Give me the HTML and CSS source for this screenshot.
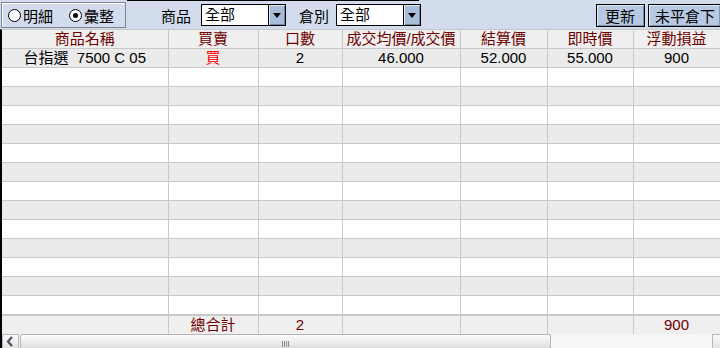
FILE: index.html
```html
<!DOCTYPE html>
<html lang="zh-Hant">
<head>
    <meta charset="UTF-8">
    <meta name="viewport" content="width=device-width, initial-scale=1.0">
    <title>未平倉彙整</title>
    <link rel="stylesheet" href="styles.css">
</head>
<body>
    <div class="toolbar">
        <div class="mode-box">
            <label class="radio"><span class="dot"></span>明細</label>
            <label class="radio"><span class="dot on"></span>彙整</label>
        </div>
        <span class="field-label first">商品</span>
        <div class="select"><span class="value">全部</span><span class="arrow"></span></div>
        <span class="field-label second">倉別</span>
        <div class="select"><span class="value">全部</span><span class="arrow"></span></div>
        <div class="spacer"></div>
        <button class="btn">更新</button>
        <button class="btn wide">未平倉下</button>
    </div>

    <div class="grid-wrap">
        <table class="grid">
            <colgroup>
                <col style="width:166px">
                <col style="width:90px">
                <col style="width:84px">
                <col style="width:118px">
                <col style="width:87px">
                <col style="width:86px">
                <col style="width:87px">
            </colgroup>
            <thead>
                <tr>
                    <th>商品名稱</th>
                    <th>買賣</th>
                    <th>口數</th>
                    <th>成交均價/成交價</th>
                    <th>結算價</th>
                    <th>即時價</th>
                    <th>浮動損益</th>
                </tr>
            </thead>
            <tbody id="rows">
                <tr class="alt">
                    <td>台指選&nbsp;&nbsp;7500 C 05</td>
                    <td class="buy">買</td>
                    <td>2</td>
                    <td>46.000</td>
                    <td>52.000</td>
                    <td>55.000</td>
                    <td>900</td>
                </tr>
            </tbody>
            <tfoot>
                <tr>
                    <td></td>
                    <td>總合計</td>
                    <td>2</td>
                    <td></td>
                    <td></td>
                    <td></td>
                    <td>900</td>
                </tr>
            </tfoot>
        </table>
    </div>

    <div class="hscroll">
        <span class="sb-btn left">
            <svg width="9" height="11" viewBox="0 0 9 11"><path d="M6 1 L2 5.5 L6 10" fill="none" stroke="#4a5560" stroke-width="2.2"/></svg>
        </span>
        <span class="thumb"><span class="grip"></span></span>
        <span class="track"></span>
        <span class="sb-btn right"></span>
    </div>

    <script>
        // fill the empty rows under the data row
        const body = document.getElementById('rows');
        for (let i = 1; i < 14; i++) {
            const tr = document.createElement('tr');
            if (i % 2 === 0) tr.className = 'alt';
            for (let c = 0; c < 7; c++) {
                tr.appendChild(document.createElement('td'));
            }
            body.appendChild(tr);
        }
    </script>
</body>
</html>
```
FILE: styles.css
```css
body {
    margin: 0;
    padding: 0;
    width: 720px;
    height: 348px;
    overflow: hidden;
    background: #fff;
    font-family: 'Liberation Sans', 'Noto Sans CJK TC', sans-serif;
    font-size: 15px;
    color: #000;
}
.toolbar {
    display: flex;
    align-items: center;
    height: 29px;
    background: #d3dcec;
    box-sizing: border-box;
    padding: 2px 0 1px 1px;
    position: relative;
    white-space: nowrap;
}
.toolbar::before {
    content: "";
    position: absolute;
    left: 127px;
    top: 0;
    width: 292px;
    height: 1px;
    background: #000;
}
.mode-box {
    display: flex;
    align-items: center;
    flex-shrink: 0;
    height: 26px;
    width: 125px;
    box-sizing: border-box;
    border: 1px solid #7d8593;
    box-shadow: inset 1px 1px 0 #fff;
    padding-left: 6px;
}
.radio {
    display: flex;
    align-items: center;
    flex-shrink: 0;
    margin-right: 16px;
}
.dot {
    flex-shrink: 0;
    width: 11px;
    height: 11px;
    border: 1px solid #000;
    border-radius: 50%;
    background: #fff;
    margin-right: 2px;
    position: relative;
}
.dot.on::after {
    content: "";
    position: absolute;
    left: 3px;
    top: 3px;
    width: 5px;
    height: 5px;
    border-radius: 50%;
    background: #000;
}
.field-label {
    margin: 0 10px 0 35px;
}
.field-label.second {
    margin: 0 7px 0 13px;
}
.select {
    display: flex;
    flex-shrink: 0;
    width: 85px;
    height: 22px;
    box-sizing: border-box;
    border: 1px solid #000;
    background: #fff;
}
.select .value {
    flex: 1;
    line-height: 20px;
    padding-left: 3px;
}
.select .arrow {
    width: 16px;
    background: #a9bcd9;
    border-left: 1px solid #000;
    box-shadow: inset 1px 1px 0 #dfe7f3, inset -1px -1px 0 #7387a6;
    position: relative;
}
.select .arrow::after {
    content: "";
    position: absolute;
    left: 4px;
    top: 8px;
    border-left: 4px solid transparent;
    border-right: 4px solid transparent;
    border-top: 5px solid #000;
}
.spacer {
    flex: 1;
}
.btn {
    flex-shrink: 0;
    height: 23px;
    width: 49px;
    margin-right: 3px;
    padding: 0;
    border: 1px solid #000;
    background: #b7c9e2;
    box-shadow: inset 1px 1px 0 #e6edf7, inset -1px -1px 0 #7f91ad;
    font-family: inherit;
    font-size: 15px;
    color: #000;
    white-space: nowrap;
    overflow: hidden;
    text-align: left;
    padding-left: 8px;
}
.btn.wide {
    width: 72px;
    margin-right: 0;
    border-right: none;
    padding-left: 6px;
}
.grid-wrap {
    border-left: 2px solid #000;
    border-top: 1px solid #c8c8c8;
    height: 304px;
    overflow: hidden;
}
.grid {
    border-collapse: collapse;
    table-layout: fixed;
    width: 718px;
}
.grid th,
.grid td {
    height: 18px;
    padding: 0;
    border-right: 1px solid #c8c8c8;
    border-bottom: 1px solid #c8c8c8;
    text-align: center;
    line-height: 18px;
    white-space: nowrap;
    overflow: hidden;
    font-weight: normal;
}
.grid th {
    background: #efefef;
    color: #6e0000;
}
.grid tbody td {
    background: #fff;
}
.grid tbody tr.alt td {
    background: #ebebeb;
}
.grid td.buy {
    color: #f00;
}
.grid tfoot td {
    background: #efefef;
    color: #6e0000;
    border-top: 2px solid #c8c8c8;
}
.hscroll {
    display: flex;
    height: 15px;
    border-left: 2px solid #000;
    background: #f6f6f6;
}
.sb-btn {
    display: flex;
    justify-content: center;
    align-items: center;
    width: 17px;
    background: linear-gradient(#fbfbfb, #e2e2e2);
    border: 1px solid #b8b8b8;
    box-sizing: border-box;
}
.thumb {
    width: 531px;
    margin-left: 1px;
    background: linear-gradient(#fdfdfd, #dedede);
    border: 1px solid #b4b4b4;
    border-radius: 2px;
    box-sizing: border-box;
    display: flex;
    justify-content: center;
    align-items: center;
}
.grip {
    width: 7px;
    height: 6px;
    margin-top: 4px;
    background: repeating-linear-gradient(90deg, #8a8a8a 0 1px, transparent 1px 2px);
}
.track {
    flex: 1;
}
.sb-btn.right {
    width: 8px;
    border-right: none;
}
```
